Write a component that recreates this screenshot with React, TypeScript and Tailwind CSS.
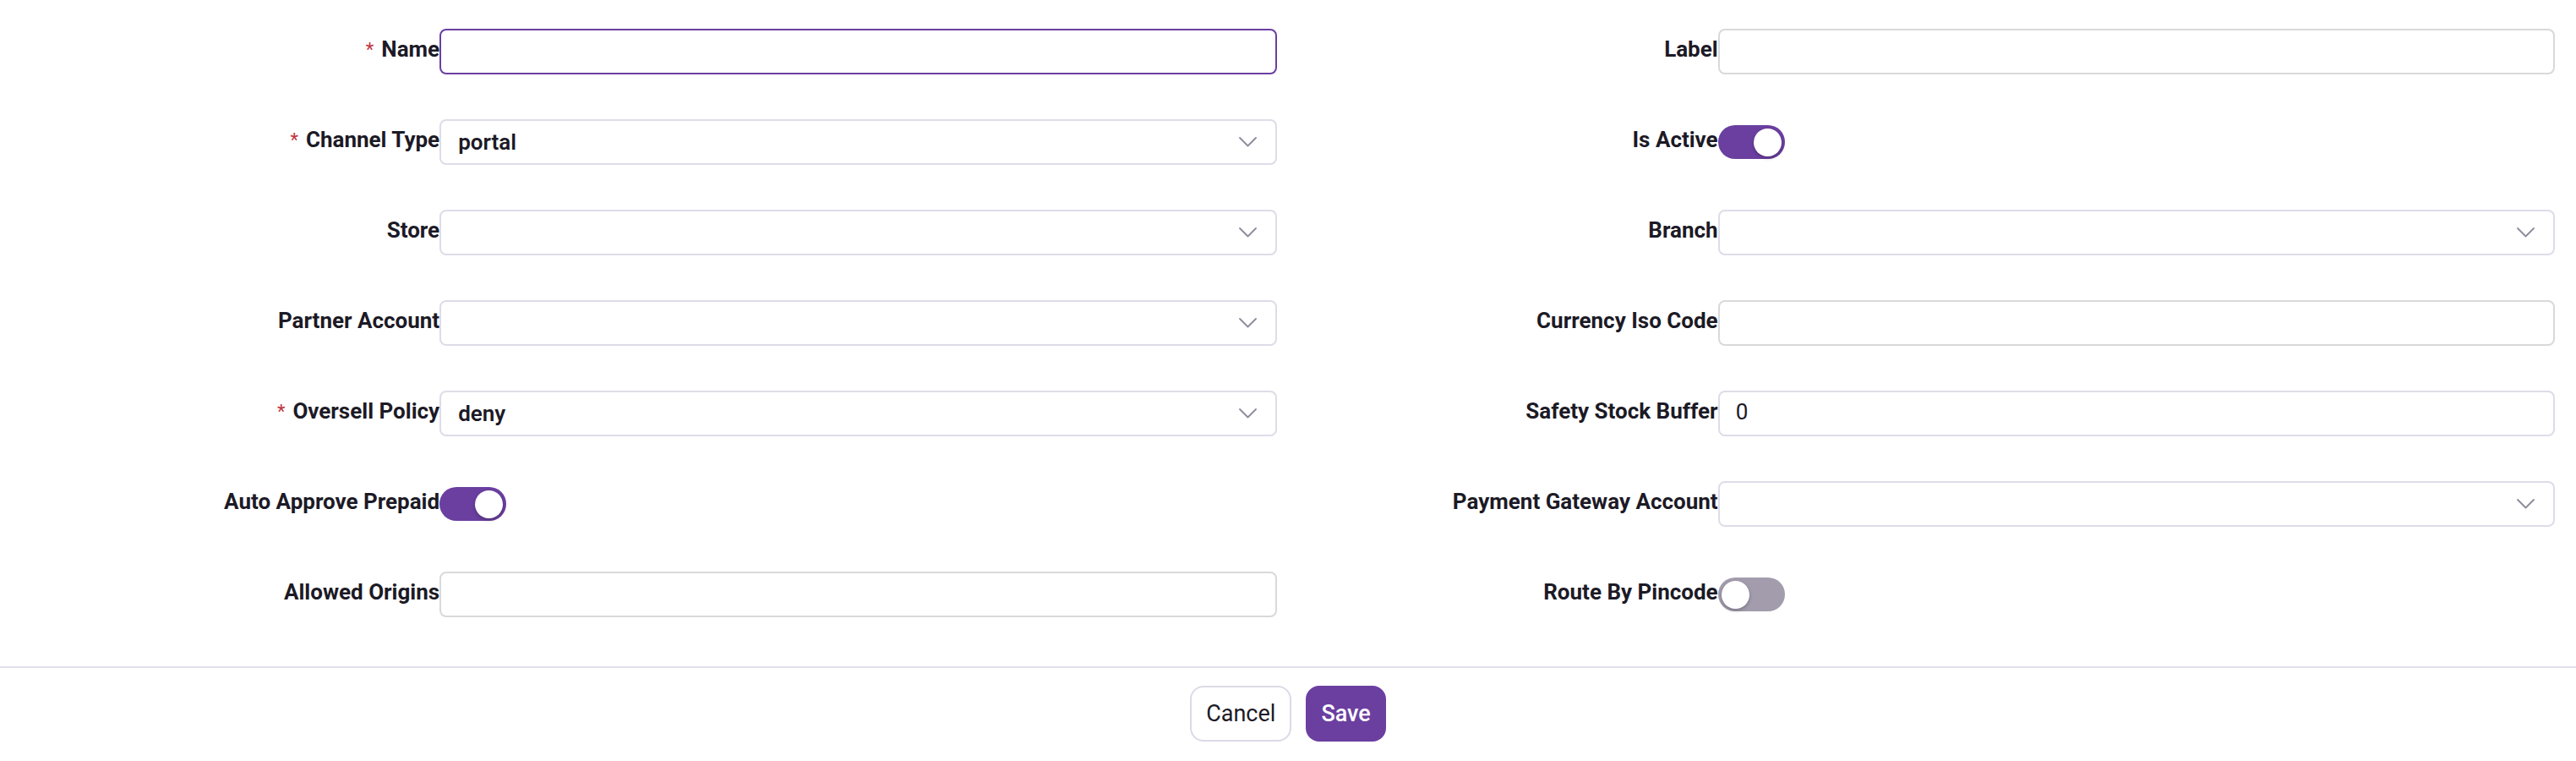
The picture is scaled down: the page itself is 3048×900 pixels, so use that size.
import React, { useState } from 'react';

type Field =
  | { kind: 'text'; label: string; required?: boolean; value?: string; focused?: boolean }
  | { kind: 'number'; label: string; required?: boolean; value: string }
  | { kind: 'select'; label: string; required?: boolean; value?: string }
  | { kind: 'switch'; label: string; required?: boolean; on: boolean };

const leftFields: Field[] = [
  { kind: 'text', label: 'Name', required: true, focused: true },
  { kind: 'select', label: 'Channel Type', required: true, value: 'portal' },
  { kind: 'select', label: 'Store' },
  { kind: 'select', label: 'Partner Account' },
  { kind: 'select', label: 'Oversell Policy', required: true, value: 'deny' },
  { kind: 'switch', label: 'Auto Approve Prepaid', on: true },
  { kind: 'text', label: 'Allowed Origins' },
];

const rightFields: Field[] = [
  { kind: 'text', label: 'Label' },
  { kind: 'switch', label: 'Is Active', on: true },
  { kind: 'select', label: 'Branch' },
  { kind: 'text', label: 'Currency Iso Code' },
  { kind: 'number', label: 'Safety Stock Buffer', value: '0' },
  { kind: 'select', label: 'Payment Gateway Account' },
  { kind: 'switch', label: 'Route By Pincode', on: false },
];

const Chevron = () => (
  <svg width="21" height="12" viewBox="0 0 21 12" fill="none" className="shrink-0">
    <path d="M1 1l9.5 9.5L20 1" stroke="#8f8a9c" strokeWidth="1.8" strokeLinecap="round" strokeLinejoin="round" />
  </svg>
);

const Toggle: React.FC<{ initial: boolean }> = ({ initial }) => {
  const [on, setOn] = useState(initial);
  return (
    <button
      type="button"
      onClick={() => setOn(!on)}
      className={`relative flex h-[40px] w-[79px] items-center rounded-full px-[4px] ${on ? 'justify-end bg-[#6b3fa0]' : 'justify-start bg-[#a39cad]'}`}
    >
      <span className="block h-[33px] w-[33px] rounded-full bg-white shadow-[0_2px_4px_rgba(0,0,0,0.25)]" />
    </button>
  );
};

const Control: React.FC<{ field: Field }> = ({ field }) => {
  switch (field.kind) {
    case 'text':
      return (
        <input
          type="text"
          defaultValue={field.value}
          className={`h-[54px] w-full rounded-[8px] border-2 bg-white px-[20px] text-[26px] outline-none ${field.focused ? 'border-[#6b3fa0]' : 'border-[#d9d9d9]'}`}
        />
      );
    case 'number':
      return (
        <input
          type="text"
          defaultValue={field.value}
          className="h-[54px] w-full rounded-[8px] border-2 border-[#dedce8] bg-white px-[19px] pb-[4px] text-[26px] outline-none"
        />
      );
    case 'select':
      return (
        <div className="flex h-[54px] w-full items-center justify-between rounded-[8px] border-2 border-[#dedce8] bg-white pl-[20px] pr-[22px]">
          <span className="text-[26px] font-semibold">{field.value}</span>
          <Chevron />
        </div>
      );
    case 'switch':
      return <Toggle initial={field.on} />;
  }
};

const FormRow: React.FC<{ field: Field }> = ({ field }) => (
  <div className="grid h-[54px] grid-cols-[1fr_2fr] items-center">
    <label className="flex items-center justify-end whitespace-nowrap pb-[6px] text-[26px] font-bold">
      {field.required && <span className="mr-[9px] text-[22px] font-normal text-[#c0343f]">*</span>}
      {field.label}
    </label>
    <div className="flex items-center">
      <Control field={field} />
    </div>
  </div>
);

export default function App() {
  const rows = leftFields.flatMap((f, i) => [f, rightFields[i]]);

  return (
    <div className="min-h-[900px] bg-white font-['Roboto','Liberation_Sans',sans-serif] text-[#1c1a26]">
      {/* Fields */}
      <div className="grid grid-cols-2 gap-x-[27px] gap-y-[53px] px-[25px] pb-[58px] pt-[34px]">
        {rows.map((field, idx) => (
          <FormRow key={idx} field={field} />
        ))}
      </div>

      {/* Footer */}
      <div className="flex items-center justify-center gap-[17px] border-t-2 border-[#e2e0ea] pb-[23px] pt-[21px]">
        <button className="h-[66px] rounded-[16px] border-2 border-[#dcdae6] bg-white px-[17px] text-[27px]">
          Cancel
        </button>
        <button className="h-[66px] rounded-[16px] bg-[#6b3fa0] px-[18px] text-[27px] font-medium text-white">
          Save
        </button>
      </div>
    </div>
  );
}
